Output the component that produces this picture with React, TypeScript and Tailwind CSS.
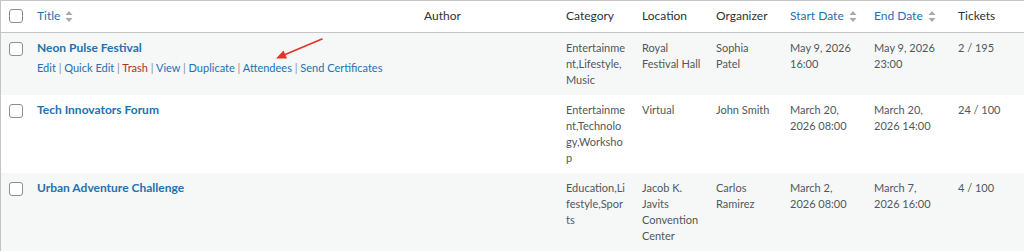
import React from "react";

type Row = {
  title: string;
  category: string[];
  location: string[];
  organizer: string[];
  start: string[];
  end: string[];
  tickets: string;
  actions?: boolean;
};

const rows: Row[] = [
  {
    title: "Neon Pulse Festival",
    category: ["Entertainme", "nt,Lifestyle,", "Music"],
    location: ["Royal", "Festival Hall"],
    organizer: ["Sophia", "Patel"],
    start: ["May 9, 2026", "16:00"],
    end: ["May 9, 2026", "23:00"],
    tickets: "2 / 195",
    actions: true,
  },
  {
    title: "Tech Innovators Forum",
    category: ["Entertainme", "nt,Technolo", "gy,Worksho", "p"],
    location: ["Virtual"],
    organizer: ["John Smith"],
    start: ["March 20,", "2026 08:00"],
    end: ["March 20,", "2026 14:00"],
    tickets: "24 / 100",
  },
  {
    title: "Urban Adventure Challenge",
    category: ["Education,Li", "festyle,Spor", "ts"],
    location: ["Jacob K.", "Javits", "Convention", "Center"],
    organizer: ["Carlos", "Ramirez"],
    start: ["March 2,", "2026 08:00"],
    end: ["March 7,", "2026 16:00"],
    tickets: "4 / 100",
  },
];

function SortIcon() {
  return (
    <svg width="8" height="13" viewBox="0 0 8 13" className="ml-[5px] inline-block">
      <path d="M0.5 5 L4 1 L7.5 5 Z" fill="#a7aaad" />
      <path d="M0.5 8 L4 12 L7.5 8 Z" fill="#a7aaad" />
    </svg>
  );
}

function Checkbox() {
  return <span className="block h-[14px] w-[14px] rounded-[3px] border border-[#8c8f94] bg-white" />;
}

function Lines({ lines }: { lines: string[] }) {
  return (
    <>
      {lines.map((l) => (
        <div key={l} className="whitespace-nowrap">
          {l}
        </div>
      ))}
    </>
  );
}

function Actions() {
  const items = [
    { label: "Edit", red: false },
    { label: "Quick Edit", red: false },
    { label: "Trash", red: true },
    { label: "View", red: false },
    { label: "Duplicate", red: false },
    { label: "Attendees", red: false },
    { label: "Send Certificates", red: false },
  ];
  return (
    <div className="mt-[4px] whitespace-nowrap text-[11px] leading-[16px]">
      {items.map((it, i) => (
        <span key={it.label}>
          <span className={it.red ? "text-[#b32d2e]" : "text-[#2271b1]"}>{it.label}</span>
          {i < items.length - 1 && <span className="text-[#8c8f94]"> | </span>}
        </span>
      ))}
    </div>
  );
}

export default function App() {
  const cell = "px-[10px] py-[7px] align-top";
  return (
    <div className="relative h-[252px] w-[1024px] overflow-hidden bg-white font-['Lato',sans-serif] text-[11px] leading-[16px] text-[#50575e]">
      <div className="border-l border-t border-[#c3c4c7]">
        <table className="w-full table-fixed border-collapse">
          <colgroup>
            <col className="w-[26px]" />
            <col className="w-[387px]" />
            <col className="w-[142px]" />
            <col className="w-[76px]" />
            <col className="w-[74px]" />
            <col className="w-[74px]" />
            <col className="w-[84px]" />
            <col className="w-[84px]" />
            <col />
          </colgroup>
          <thead>
            <tr className="h-[31px] border-b border-[#c3c4c7] text-[12px] text-[#2c3338]">
              <th className="pl-[8px] align-middle">
                <Checkbox />
              </th>
              <th className="px-[10px] text-left font-normal text-[#2271b1]">
                <span className="inline-flex items-center">
                  Title
                  <SortIcon />
                </span>
              </th>
              <th className="px-[10px] text-left font-normal">Author</th>
              <th className="px-[10px] text-left font-normal">Category</th>
              <th className="px-[10px] text-left font-normal">Location</th>
              <th className="px-[10px] text-left font-normal">Organizer</th>
              <th className="px-[10px] text-left font-normal text-[#2271b1]">
                <span className="inline-flex items-center whitespace-nowrap">
                  Start Date
                  <SortIcon />
                </span>
              </th>
              <th className="px-[10px] text-left font-normal text-[#2271b1]">
                <span className="inline-flex items-center whitespace-nowrap">
                  End Date
                  <SortIcon />
                </span>
              </th>
              <th className="px-[10px] text-left font-normal">Tickets</th>
            </tr>
          </thead>
          <tbody>
            {rows.map((r, i) => (
              <tr key={r.title} className={i % 2 === 0 ? "bg-[#f6f7f7]" : "bg-white"}>
                <td className="pl-[8px] pt-[9px] align-top">
                  <Checkbox />
                </td>
                <td className={cell}>
                  <div className="whitespace-nowrap text-[12px] font-bold leading-[16px] text-[#2271b1]">
                    {r.title}
                  </div>
                  {r.actions && <Actions />}
                </td>
                <td className={cell} />
                <td className={cell}>
                  <Lines lines={r.category} />
                </td>
                <td className={cell}>
                  <Lines lines={r.location} />
                </td>
                <td className={cell}>
                  <Lines lines={r.organizer} />
                </td>
                <td className={cell}>
                  <Lines lines={r.start} />
                </td>
                <td className={cell}>
                  <Lines lines={r.end} />
                </td>
                <td className={cell}>
                  <div className="whitespace-nowrap">{r.tickets}</div>
                </td>
              </tr>
            ))}
          </tbody>
        </table>
      </div>
      <svg className="pointer-events-none absolute left-0 top-0" width="1024" height="252">
        <line x1="322" y1="39" x2="284" y2="55" stroke="#e8302a" strokeWidth="1.6" strokeLinecap="round" />
        <path d="M276 58.5 L283.5 50.5 L287 58.5 Z" fill="#e8302a" />
      </svg>
    </div>
  );
}
